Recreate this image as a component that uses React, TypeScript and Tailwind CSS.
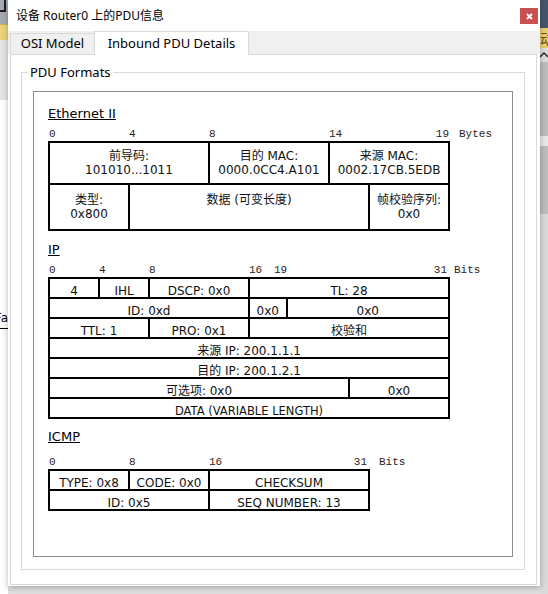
import type { ReactNode } from "react";

const UI = "font-['Noto_Sans','Noto_Sans_CJK_SC',sans-serif]";
const TBL = "font-['DejaVu_Sans','Noto_Sans_CJK_SC',sans-serif]";
const MONO = "font-['Liberation_Mono','DejaVu_Sans_Mono',monospace]";

function Cell({ cls, children }: { cls: string; children: ReactNode }) {
  return (
    <div className={`border border-black text-center whitespace-nowrap ${cls}`}>
      {children}
    </div>
  );
}

function Heading({ children, cls = "" }: { children: ReactNode; cls?: string }) {
  return (
    <div className={`${TBL} text-[13px] leading-[16px] text-black underline ${cls}`}>
      {children}
    </div>
  );
}

function LeftEdge() {
  return (
    <div className="w-[8px] shrink-0 flex flex-col overflow-hidden">
      <div className="h-[24px] bg-[#a6aab1] relative overflow-hidden">
        <div className="w-[6px] h-[12px] border-r-2 border-b-2 border-[#1c1c1c]" />
      </div>
      <div className="h-[16px] bg-[#ecd47a] border-t border-[#c9b25c]" />
      <div className="h-[60px] bg-[#e4e4e4]" />
      <div className="flex-1 bg-white flex flex-col">
        <div className="h-[211px]" />
        <div className={`${TBL} text-[12px] leading-[14px] flex justify-end whitespace-nowrap`}>Fa</div>
        <div className="h-[1px] mt-[3px] bg-black" />
      </div>
    </div>
  );
}

function RightEdge() {
  return (
    <div className="w-[8px] shrink-0 flex flex-col overflow-hidden">
      <div className="h-[28px] bg-[#46566b]" />
      <div className="h-[20px] bg-[#e9d070] text-[#6b4b10] text-[14px] leading-[20px] whitespace-nowrap font-['Noto_Sans_CJK_SC',sans-serif]">
        动
      </div>
      <div className="h-[14px] bg-[#dedede] flex items-center">
        <svg width="8" height="6" viewBox="0 0 8 6">
          <path d="M0 5 L4 1 L8 5" stroke="#333" strokeWidth="1.6" fill="none" />
        </svg>
      </div>
      <div className="h-[74px] bg-[#bdbdbd]" />
      <div className="h-[10px] bg-[#e8e8e8]" />
      <div className="h-[68px] bg-[#bdbdbd]" />
      <div className="flex-1 bg-[#dadada]" />
    </div>
  );
}

function EthernetTable() {
  const r1 = "h-[42px] pt-[6px]";
  const r2 = "h-[46px] pt-[8px]";
  return (
    <div className={`${TBL} grid grid-cols-[repeat(20,20px)] w-fit border border-black text-[12px] leading-[14px] text-[#111]`}>
      <Cell cls={`col-span-8 ${r1}`}>前导码:<br />101010...1011</Cell>
      <Cell cls={`col-span-6 ${r1}`}>目的 MAC:<br />0000.0CC4.A101</Cell>
      <Cell cls={`col-span-6 ${r1}`}>来源 MAC:<br />0002.17CB.5EDB</Cell>
      <Cell cls={`col-span-4 ${r2}`}>类型:<br />0x800</Cell>
      <Cell cls={`col-span-12 ${r2}`}>数据 (可变长度)</Cell>
      <Cell cls={`col-span-4 ${r2}`}>帧校验序列:<br />0x0</Cell>
    </div>
  );
}

function IpTable() {
  const r = "h-[20px] pt-[5px]";
  return (
    <div className={`${TBL} grid grid-cols-[repeat(32,12.5px)] w-fit border border-black text-[12px] leading-[14px] text-[#111]`}>
      <Cell cls={`col-span-4 ${r}`}>4</Cell>
      <Cell cls={`col-span-4 ${r}`}>IHL</Cell>
      <Cell cls={`col-span-8 ${r}`}>DSCP: 0x0</Cell>
      <Cell cls={`col-span-16 ${r}`}>TL: 28</Cell>

      <Cell cls={`col-span-16 ${r}`}>ID: 0xd</Cell>
      <Cell cls={`col-span-3 ${r}`}>0x0</Cell>
      <Cell cls={`col-span-13 ${r}`}>0x0</Cell>

      <Cell cls={`col-span-8 ${r}`}>TTL: 1</Cell>
      <Cell cls={`col-span-8 ${r}`}>PRO: 0x1</Cell>
      <Cell cls={`col-span-16 ${r}`}>校验和</Cell>

      <Cell cls={`col-span-32 ${r}`}>来源 IP: 200.1.1.1</Cell>
      <Cell cls={`col-span-32 ${r}`}>目的 IP: 200.1.2.1</Cell>

      <Cell cls={`col-span-24 ${r}`}>可选项: 0x0</Cell>
      <Cell cls={`col-span-8 ${r}`}>0x0</Cell>

      <Cell cls={`col-span-32 ${r} text-[11.5px]`}>DATA (VARIABLE LENGTH)</Cell>
    </div>
  );
}

function IcmpTable() {
  const r = "h-[20px] pt-[5px]";
  return (
    <div className={`${TBL} grid grid-cols-[repeat(32,10px)] w-fit border border-black text-[12px] leading-[14px] text-[#111]`}>
      <Cell cls={`col-span-8 ${r}`}>TYPE: 0x8</Cell>
      <Cell cls={`col-span-8 ${r}`}>CODE: 0x0</Cell>
      <Cell cls={`col-span-16 ${r}`}>CHECKSUM</Cell>
      <Cell cls={`col-span-16 ${r}`}>ID: 0x5</Cell>
      <Cell cls={`col-span-16 ${r}`}>SEQ NUMBER: 13</Cell>
    </div>
  );
}

export default function App() {
  const ruler = `${MONO} text-[11px] leading-[14px] text-[#2a1c1c] whitespace-nowrap`;
  return (
    <div className="w-[548px] h-[594px] flex overflow-hidden bg-[#dedede]">
      <LeftEdge />

      <div className={`${UI} relative z-10 w-[532px] h-[586px] shrink-0 bg-white flex flex-col shadow-[0_1px_6px_rgba(0,0,0,0.3)]`}>
        {/* title bar */}
        <div className="h-[31px] flex items-center pl-[8px] shrink-0">
          <span className="text-[12px] text-black">设备 Router0 上的PDU信息</span>
          <button className="ml-auto mr-[2px] self-start mt-[8px] w-[18px] h-[16px] bg-[#c75050] flex items-center justify-center">
            <svg width="7" height="7" viewBox="0 0 7 7">
              <path d="M1 1 L6 6 M6 1 L1 6" stroke="#fff" strokeWidth="1.8" />
            </svg>
          </button>
        </div>

        {/* tabs */}
        <div className="h-[23px] bg-[#f0f0f0] flex items-end pl-[2px] shrink-0">
          <div className="w-[84px] h-[21px] border-l border-t border-[#d9d9d9] bg-[#f0f0f0] flex items-center justify-center text-[13px] text-black">
            OSI Model
          </div>
          <div className="relative z-10 -mb-px w-[155px] h-[24px] border-l border-t border-r border-[#d9d9d9] bg-white flex items-center justify-center text-[13px] text-black">
            Inbound PDU Details
          </div>
        </div>

        {/* tab panel */}
        <div className="flex-1 ml-[2px] mr-[3px] mb-[1px] border border-[#d9d9d9] bg-white flex flex-col min-h-0">
          <fieldset className="flex-1 min-h-0 mt-[9px] ml-[10px] mr-[11px] mb-[14px] border border-[#d9d9d9] px-[11px] flex flex-col">
            <legend className="ml-[-5px] px-[2px] text-[13px] leading-[16px] text-black">PDU Formats</legend>

            <div className="flex-1 mt-[11px] mb-[12px] border border-[#8b8b96] pl-[14px] pt-[14px] flex flex-col items-start">
              {/* Ethernet II */}
              <Heading>Ethernet II</Heading>
              <div className={`${ruler} mt-[5px] ml-[1px] grid grid-cols-[repeat(20,20px)_auto]`}>
                <span className="row-start-1 col-start-1">0</span>
                <span className="row-start-1 col-start-5">4</span>
                <span className="row-start-1 col-start-9">8</span>
                <span className="row-start-1 col-start-15">14</span>
                <span className="row-start-1 col-start-20 text-right">19</span>
                <span className="row-start-1 col-start-21 pl-[10px]">Bytes</span>
              </div>
              <EthernetTable />

              {/* IP */}
              <Heading cls="mt-[11px]">IP</Heading>
              <div className={`${ruler} mt-[5px] ml-[1px] grid grid-cols-[repeat(32,12.5px)_auto]`}>
                <span className="row-start-1 col-start-1">0</span>
                <span className="row-start-1 col-start-5">4</span>
                <span className="row-start-1 col-start-9">8</span>
                <span className="row-start-1 col-start-17">16</span>
                <span className="row-start-1 col-start-19">19</span>
                <span className="row-start-1 col-start-31 col-span-2 text-right pr-[2px]">31</span>
                <span className="row-start-1 col-start-33 pl-[5px]">Bits</span>
              </div>
              <IpTable />

              {/* ICMP */}
              <Heading cls="mt-[10px]">ICMP</Heading>
              <div className={`${ruler} mt-[10px] ml-[1px] grid grid-cols-[repeat(32,10px)_auto]`}>
                <span className="row-start-1 col-start-1">0</span>
                <span className="row-start-1 col-start-9">8</span>
                <span className="row-start-1 col-start-17">16</span>
                <span className="row-start-1 col-start-31 col-span-2 text-right pr-[2px]">31</span>
                <span className="row-start-1 col-start-33 pl-[10px]">Bits</span>
              </div>
              <IcmpTable />
            </div>
          </fieldset>
        </div>
      </div>

      <RightEdge />
    </div>
  );
}
